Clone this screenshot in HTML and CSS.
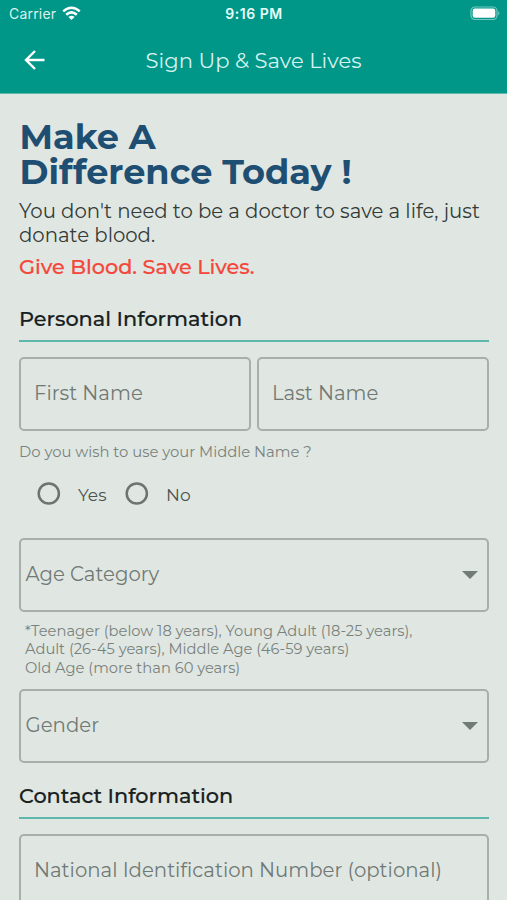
FILE: index.html
```html
<!DOCTYPE html>
<html lang="en">
<head>
<meta charset="utf-8">
<title>Sign Up &amp; Save Lives</title>
<link rel="stylesheet" href="styles.css">
</head>
<body>
<header class="header">
  <div class="status">
    <div class="carrier"><span>Carrier</span>
      <svg class="wifi" width="19" height="15" viewBox="0 0 19 15" fill="none" stroke="#fff" stroke-width="2.5"><path d="M1.2 5.4Q9.5-2 17.8 5.4M4.2 8.7Q9.5 4 14.8 8.7"/><path d="M6.4 11Q9.5 8.4 12.6 11L9.5 14Z" fill="#fff" stroke="none"/></svg>
    </div>
    <span class="time">9:16 PM</span>
    <svg class="battery" width="31" height="15" viewBox="0 0 31 15"><rect x="1" y="1" width="26" height="12.5" rx="4" fill="none" stroke="#74c8bf" stroke-width="1.2"/><rect x="2.7" y="2.6" width="22.6" height="9.2" rx="2.2" fill="#fff"/><path d="M28.4 5q2 2.2 0 4.4z" fill="#8ed2ca"/></svg>
  </div>
  <div class="appbar">
    <svg class="back" width="22" height="22" viewBox="0 0 22 22" fill="none" stroke="#fff" stroke-width="2.4"><path d="M20.5 11H2.5M11 2L2 11L11 20"/></svg>
    <h1 class="title">Sign Up &amp; Save Lives</h1>
  </div>
</header>
<main class="content">
  <h2 class="hero">Make A<br>Difference Today !</h2>
  <p class="lead">You don't need to be a doctor to save a life, just<br>donate blood.</p>
  <p class="slogan">Give Blood. Save Lives.</p>
  <h3 class="section personal">Personal Information</h3>
  <div class="row">
    <div class="field">First Name</div>
    <div class="field">Last Name</div>
  </div>
  <p class="question">Do you wish to use your Middle Name ?</p>
  <div class="radios">
    <label class="radio"><svg class="ring" width="24" height="24" viewBox="0 0 24 24"><circle cx="11.8" cy="11.5" r="10.1" fill="none" stroke="#6c7470" stroke-width="2.5"/></svg>Yes</label>
    <label class="radio"><svg class="ring" width="24" height="24" viewBox="0 0 24 24"><circle cx="11.8" cy="11.5" r="10.1" fill="none" stroke="#6c7470" stroke-width="2.5"/></svg>No</label>
  </div>
  <div class="field select">Age Category<i class="caret"></i></div>
  <p class="hint">*Teenager (below 18 years), Young Adult (18-25 years),<br>Adult (26-45 years), Middle Age (46-59 years)<br>Old Age (more than 60 years)</p>
  <div class="field select">Gender<i class="caret"></i></div>
  <h3 class="section contact">Contact Information</h3>
  <div class="field">National Identification Number (optional)</div>
</main>
</body>
</html>
```
FILE: styles.css
```css
* { box-sizing: border-box; margin: 0; padding: 0; }
body {
  height: 900px;
  overflow: hidden;
  background: #e0e7e2;
  font-family: Montserrat, Inter, sans-serif;
  font-weight: 400;
  color: #343b37;
}
.header { height: 94px; background: #009688; border-bottom: 1px solid #5db8ad; color: #fff; }
.status {
  display: grid; grid-template-columns: 1fr auto 1fr; align-items: center;
  height: 27px; padding: 0 7px 0 9px;
  font-family: Inter, sans-serif; font-size: 14px;
}
.carrier { display: flex; align-items: center; gap: 6px; color: #d9f3ef; letter-spacing: .2px; }
.time { font-size: 14px; font-weight: 600; color: #e9fffb; letter-spacing: .55px; margin-right: 1px; }
.battery { justify-self: end; margin-right: -1px; }
.appbar { display: grid; grid-template-columns: 60px 1fr 60px; align-items: center; height: 66px; }
.back { margin-left: 24px; }
.title { text-align: center; font-size: 21.1px; font-weight: 400; color: #d5f3ef; white-space: nowrap; }
.content { padding: 25px 18px 0 19px; white-space: nowrap; }
.hero { padding-left: .5px; font-size: 35.1px; line-height: 35.3px; font-weight: 700; color: #1f4e73; }
.lead { margin-top: 9px; font-size: 19.7px; line-height: 24.4px; }
.slogan { margin-top: 6.6px; font-size: 20.8px; line-height: 26px; font-weight: 500; color: #f4473b; -webkit-text-stroke: .2px; letter-spacing: -.03px; }
.section {
  height: 35px; margin-bottom: 15px; border-bottom: 2px solid #5fb8ac;
  font-size: 20.8px; line-height: 24px; font-weight: 500; color: #18201d; -webkit-text-stroke: .2px;
}
.personal { margin-top: 27px; }
.contact { margin-top: 21px; }
.row { display: grid; grid-template-columns: 1fr 1fr; gap: 6px; }
.field {
  display: flex; align-items: center; justify-content: space-between;
  height: 74px; padding: 0 13px 2px; border: 2px solid #a6afaa; border-radius: 5px;
  font-size: 19.7px; color: #717975;
}
.select { padding: 0 9px 2px 4.5px; }
.caret { border: 0 solid transparent; border-top-color: #737b77; border-width: 8px 8px 0; margin-top: 2px; }
.question { margin-top: 11px; font-size: 14.8px; line-height: 20px; color: #7a827e; }
.radios { display: flex; margin-top: 20px; margin-left: 18px; height: 24px; margin-bottom: 32px; }
.radio { display: flex; align-items: center; gap: 17px; width: 88px; font-size: 17.1px; color: #4c5450; }
.hint { margin: 10px 0 12px 6px; font-size: 14.7px; line-height: 18.3px; color: #7a827e; }
```
